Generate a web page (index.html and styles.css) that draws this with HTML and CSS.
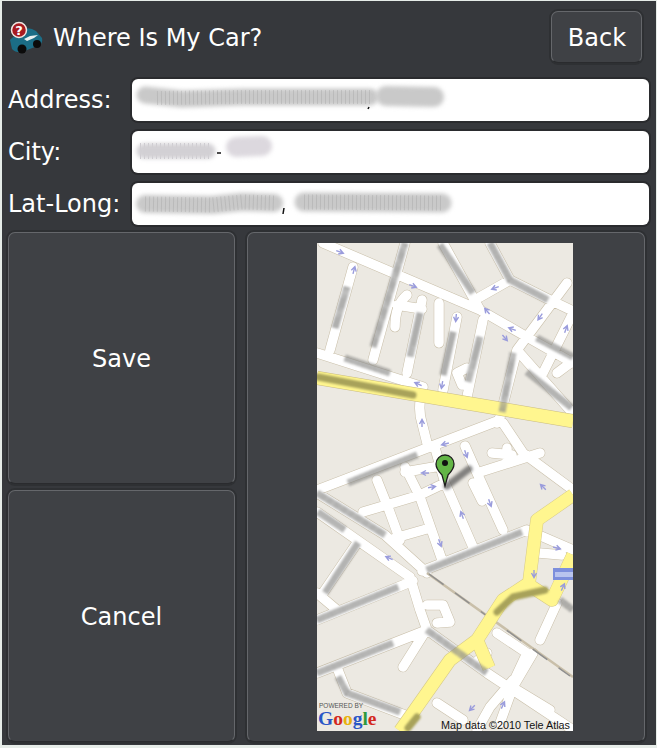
FILE: index.html
```html
<!DOCTYPE html>
<html lang="en">
<head>
  <meta charset="UTF-8">
  <meta name="viewport" content="width=device-width, initial-scale=1.0">
  <title>Where Is My Car?</title>
  <link rel="stylesheet" href="styles.css">
</head>
<body>
  <div class="app">
    <div class="header">
      <div class="brand">
        <svg class="car-icon" width="34" height="34" viewBox="0 0 34 34">
          <path class="car-body" d="M1 19 Q4 15 9 14 L15 8 Q21 6 27 10 L33 17 Q34 21 31 24 L13 31 Q7 32 3 28 Z"/>
          <path class="car-glass" d="M15 18 L21 15 L29 14 L25 17 L18 20 Z"/>
          <circle class="car-wheel" cx="13" cy="28" r="4.5"/>
          <circle class="car-wheel" cx="28" cy="23" r="4"/>
          <circle class="badge" cx="10" cy="9" r="7.5"/>
          <text class="badge-mark" x="10" y="13.5">?</text>
        </svg>
        <span class="title">Where Is My Car?</span>
      </div>
      <button class="btn back-btn" type="button">Back</button>
    </div>

    <div class="form-row">
      <label>Address:</label>
      <div class="field">
        <svg class="smudge-svg" width="517" height="42">
          <path class="smudge" stroke-width="17" d="M13 16 L50 20 L110 18 L238 18"/>
          <path class="smudge-lines" stroke-width="14" d="M25 19 L110 18 L238 18"/>
          <path class="smudge" stroke-width="20" d="M254 17 L302 18"/>
          <path class="mark" d="M237 28 L236 30"/>
        </svg>
      </div>
    </div>
    <div class="form-row">
      <label>City:</label>
      <div class="field">
        <svg class="smudge-svg" width="517" height="42">
          <path class="smudge-lines dark" stroke-width="16" d="M8 20 L80 20"/>
          <path class="smudge soft" stroke-width="15" d="M12 20 L76 20"/>
          <path class="mark" d="M85 22 L89 22"/>
          <path class="smudge pale" stroke-width="20" d="M104 16 L130 15"/>
        </svg>
      </div>
    </div>
    <div class="form-row">
      <label>Lat-Long:</label>
      <div class="field">
        <svg class="smudge-svg" width="517" height="42">
          <path class="smudge" stroke-width="18" d="M13 21 L80 22 L110 19 L142 20"/>
          <path class="smudge-lines" stroke-width="15" d="M13 21 L80 22 L110 19 L142 20"/>
          <path class="mark" d="M152 25 L151 31"/>
          <path class="smudge" stroke-width="19" d="M172 19 L310 20"/>
          <path class="smudge-lines" stroke-width="15" d="M172 19 L310 20"/>
        </svg>
      </div>
    </div>

    <div class="main">
      <div class="actions">
        <button class="btn action-btn" type="button">Save</button>
        <button class="btn action-btn" type="button">Cancel</button>
      </div>
      <div class="map-panel">
        <svg class="map" width="256" height="488" viewBox="0 0 256 488">
          <defs>
            <path id="streets" d="M6 0 L163 67 L210 94 L256 120
              M0 110 L106 144 Q100 165 105 180 L110 200
              M36 24 L13 107 M88 0 L56 117 M105 57 L90 130
              M90 52 Q78 62 78 84 M80 62 L105 66
              M126 0 L163 67 M173 0 L193 37 L233 57 L256 68 M193 37 L163 54
              M250 40 L200 107 L183 174 L180 180
              M166 77 L150 154 M140 74 L126 147 M122 60 L122 100
              M200 107 L253 167 M256 70 L226 130 M240 130 L256 118
              M150 125 L140 130 L145 142
              M183 177 L110 205 L0 247
              M186 180 L206 210 L256 247
              M223 210 L160 230 M175 210 L195 212 M190 205 L190 216
              M118 205 L128 240 L156 304
              M148 203 L160 230 L186 287 M156 240 L165 258
              M88 224 L103 254 L125 317
              M60 237 L72 267 L83 297
              M46 269 L103 252 L128 240
              M78 295 L113 285
              M88 229 L123 223
              M105 328 L210 287 M210 287 L256 307 M222 310 L245 312
              M0 250 L68 292 L110 330
              M0 269 L93 334 L103 367 L110 387 L170 430 L256 487
              M40 300 L6 350 M0 350 L20 367
              M0 377 L96 338 M0 430 L110 387 M108 389 L86 424
              M110 362 L126 362 L133 379 L120 380
              M21 427 L30 450 L93 474
              M196 437 L173 464 L160 487 M216 410 L196 444 L183 480
              M120 460 L146 477 M240 360 L223 397 M180 390 L210 410 L196 440
              M200 447 L233 467 M158 420 L170 410"/>
            <path id="highway" d="M0 135 L256 178"/>
            <path id="yellow-road" d="M256 252 L220 277 L212 340 L186 357 L160 397 L133 417 L83 488 M212 342 L235 357 L256 312 M160 397 L172 425"/>
            <path id="arrow" d="M-4 0 H2 M-1 -2.5 L3.5 0 L-1 2.5"/>
          </defs>

          <rect class="map-bg" width="256" height="488"/>
          <use class="street-edge" href="#streets"/>
          <use class="street" href="#streets"/>
          <path class="rail-edge" d="M110 330 L256 434"/>
          <path class="rail" d="M112 331 L253 433"/>
          <use class="highway-edge" href="#highway"/>
          <use class="highway" href="#highway"/>
          <use class="yellow-edge" href="#yellow-road"/>
          <use class="yellow" href="#yellow-road"/>

          <g class="arrows">
            <use href="#arrow" transform="translate(23 9) rotate(20)"/>
            <use href="#arrow" transform="translate(37 27) rotate(-75)"/>
            <use href="#arrow" transform="translate(96 43) rotate(20)"/>
            <use href="#arrow" transform="translate(139 75) rotate(95)"/>
            <use href="#arrow" transform="translate(178 45) rotate(160)"/>
            <use href="#arrow" transform="translate(170 68) rotate(230)"/>
            <use href="#arrow" transform="translate(195 86) rotate(200)"/>
            <use href="#arrow" transform="translate(188 95) rotate(50)"/>
            <use href="#arrow" transform="translate(223 74) rotate(125)"/>
            <use href="#arrow" transform="translate(249 86) rotate(-70)"/>
            <use href="#arrow" transform="translate(125 142) rotate(100)"/>
            <use href="#arrow" transform="translate(101 141) rotate(205)"/>
            <use href="#arrow" transform="translate(105 180) rotate(-90)"/>
            <use href="#arrow" transform="translate(128 201) rotate(165)"/>
            <use href="#arrow" transform="translate(149 211) rotate(70)"/>
            <use href="#arrow" transform="translate(108 230) rotate(180)"/>
            <use href="#arrow" transform="translate(115 244) rotate(-10)"/>
            <use href="#arrow" transform="translate(226 244) rotate(225)"/>
            <use href="#arrow" transform="translate(173 260) rotate(70)"/>
            <use href="#arrow" transform="translate(145 272) rotate(-110)"/>
            <use href="#arrow" transform="translate(123 300) rotate(70)"/>
            <use href="#arrow" transform="translate(72 315) rotate(205)"/>
            <use href="#arrow" transform="translate(240 305) rotate(15)"/>
            <use href="#arrow" transform="translate(217 331) rotate(90)"/>
            <use href="#arrow" transform="translate(246 344) rotate(-65)"/>
            <use href="#arrow" transform="translate(155 465) rotate(135)"/>
            <use href="#arrow" transform="translate(186 462) rotate(-65)"/>
          </g>

          <g class="blur-grey">
            <path d="M88 0 L56 104"/>
            <path d="M30 44 L18 85"/>
            <path d="M123 2 L156 50"/>
            <path d="M173 0 L193 37 L231 57"/>
            <path d="M103 70 L93 114"/>
            <path d="M136 89 L126 132"/>
            <path d="M163 94 L151 139"/>
            <path d="M196 110 L185 169"/>
            <path d="M220 95 L256 114"/>
            <path d="M210 129 L255 165"/>
            <path d="M28 115 L73 130"/>
            <path d="M100 212 L31 240"/>
            <path d="M0 250 L68 292"/>
            <path d="M1 269 L28 287"/>
            <path d="M41 300 L8 350"/>
            <path d="M0 377 L81 344"/>
            <path d="M0 430 L76 400"/>
            <path d="M21 434 L30 450 L83 469"/>
            <path d="M110 327 L205 289"/>
            <path d="M110 387 L170 430"/>
            <path d="M243 357 L256 367"/>
          </g>
          <g class="blur-olive">
            <path d="M1 134 L96 152"/>
            <path d="M180 369 L196 354 L228 347"/>
            <path d="M91 485 L100 474"/>
          </g>

          <rect class="sign" x="236" y="325" width="20" height="12"/>
          <rect class="sign-text" x="238" y="329" width="18" height="5"/>

          <path class="pin-shadow" d="M130 243 L152 226"/>
          <path class="pin" d="M128 243 L125 232 Q119 226 119 221 A9 9 0 1 1 137 221 Q137 226 131 232 Z"/>
          <circle class="pin-hole" cx="128" cy="220" r="3"/>

          <text class="powered" x="2" y="465">POWERED BY</text>
          <text class="google" x="1" y="482"><tspan class="g-blue">G</tspan><tspan class="g-red">o</tspan><tspan class="g-yellow">o</tspan><tspan class="g-blue">g</tspan><tspan class="g-green">l</tspan><tspan class="g-red">e</tspan></text>
          <text class="map-credit" x="124" y="486">Map data ©2010 Tele Atlas</text>
        </svg>
      </div>
    </div>
  </div>
</body>
</html>
```

FILE: styles.css
```css
html, body {
  margin: 0;
  height: 100%;
}
body {
  background-color: #e6ece8;
  font-family: "DejaVu Sans", sans-serif;
  color: #fff;
}
.app {
  box-sizing: border-box;
  width: 654px;
  height: 744px;
  margin: 1px 0 0 2px;
  padding: 10px 7px 3px 6px;
  background-color: #36383c;
  display: flex;
  flex-direction: column;
}
.header {
  display: flex;
  align-items: center;
  justify-content: space-between;
  height: 52px;
  padding-right: 7px;
  margin-bottom: 16px;
}
.brand {
  display: flex;
  align-items: center;
  margin-top: 2px;
}
.car-icon {
  margin-left: 1px;
  margin-right: 10px;
}
.car-body { fill: #1b6d86; }
.car-glass { fill: #e8f0f0; }
.car-wheel { fill: #0b0b0b; }
.badge {
  fill: #a81a20;
  stroke: #f2e6e2;
  stroke-width: 1.5;
}
.badge-mark {
  fill: #fff;
  font-size: 13px;
  font-weight: bold;
  text-anchor: middle;
}
.title {
  font-size: 24px;
}
.btn {
  font-family: "DejaVu Sans", sans-serif;
  color: #fff;
  background-color: #3f4145;
  border: 1px solid #65676b;
  border-bottom-color: #2a2b2e;
  border-radius: 7px;
  box-shadow: 0 0 0 2px #2e3033;
  padding: 2px 0 0;
  cursor: pointer;
}
.back-btn {
  width: 91px;
  height: 52px;
  padding-left: 1px;
  font-size: 24px;
}
.form-row {
  display: flex;
  align-items: center;
  height: 42px;
  margin-bottom: 10px;
}
.form-row label {
  width: 124px;
  font-size: 24px;
  margin-top: -1px;
}
.field {
  flex: 1;
  height: 42px;
  background-color: #fff;
  border-radius: 6px;
  box-shadow: 0 0 0 2px #2a2b2e;
  overflow: hidden;
}
.smudge-svg { display: block; }
.smudge {
  fill: none;
  stroke: #c9c9c9;
  stroke-linecap: round;
  stroke-linejoin: round;
  filter: blur(2px);
}
.smudge.soft { stroke: #d2d0d4; }
.smudge.pale { stroke: #dcd8de; }
.smudge-lines {
  fill: none;
  stroke: #a8a8a8;
  stroke-dasharray: 1 3;
  opacity: 0.45;
}
.smudge-lines.dark { stroke: #8a8490; }
.mark {
  fill: none;
  stroke: #111;
  stroke-width: 1.5;
}
.main {
  flex: 1;
  display: flex;
  gap: 12px;
  margin-top: -3px;
}
.actions {
  width: 227px;
  display: flex;
  flex-direction: column;
  gap: 6px;
}
.action-btn {
  flex: 1;
  font-size: 24px;
}
.map-panel {
  box-sizing: border-box;
  width: 398px;
  display: flex;
  align-items: center;
  justify-content: center;
  padding-right: 2px;
  background-color: #3f4145;
  border: 1px solid #65676b;
  border-bottom-color: #2a2b2e;
  border-radius: 7px;
  box-shadow: 0 0 0 2px #2e3033;
}
.map { display: block; }
.map-bg { fill: #ece9e2; }
.street-edge, .street {
  fill: none;
  stroke-linecap: round;
  stroke-linejoin: round;
}
.street-edge { stroke: #c9bfa9; stroke-width: 10.5; }
.street { stroke: #fff; stroke-width: 9.5; }
.rail-edge { stroke: #c9bfa9; stroke-width: 2.5; }
.rail {
  stroke: #8f8f8f;
  stroke-width: 1.5;
  stroke-dasharray: 18 14;
}
.highway-edge, .highway, .yellow-edge, .yellow {
  fill: none;
  stroke-linejoin: round;
}
.highway-edge { stroke: #c9bb84; stroke-width: 14; }
.highway { stroke: #fff68f; stroke-width: 13; }
.yellow-edge { stroke: #d6c987; stroke-width: 13.5; }
.yellow { stroke: #fff68f; stroke-width: 12.5; }
.arrows {
  fill: none;
  stroke: #9a9cdc;
  stroke-width: 1.4;
}
.blur-grey, .blur-olive {
  fill: none;
  stroke-linejoin: round;
  stroke-width: 7;
}
.blur-grey {
  stroke: #8f8f8d;
  stroke-dasharray: 1.2 0.6;
  filter: blur(1.1px);
}
.blur-olive {
  stroke: #a8a25a;
  stroke-linecap: round;
  filter: blur(1px);
}
.sign { fill: #7d8fdc; }
.sign-text { fill: #b9c4ee; }
.pin-shadow {
  stroke: #555;
  stroke-width: 7;
  stroke-linecap: round;
  opacity: 0.7;
  filter: blur(1.5px);
}
.pin {
  fill: #63b546;
  stroke: #1c1c1c;
  stroke-width: 1.3;
}
.pin-hole { fill: #111; }
.powered {
  fill: #555;
  font-family: "Liberation Sans", sans-serif;
  font-size: 6.5px;
}
.google {
  font-family: "Liberation Serif", serif;
  font-size: 19.5px;
  font-weight: bold;
}
.g-blue { fill: #2a56c6; }
.g-red { fill: #d3281e; }
.g-yellow { fill: #e8b10e; }
.g-green { fill: #2f9a3c; }
.map-credit {
  fill: #111;
  font-family: "Liberation Sans", sans-serif;
  font-size: 10.8px;
}
```
